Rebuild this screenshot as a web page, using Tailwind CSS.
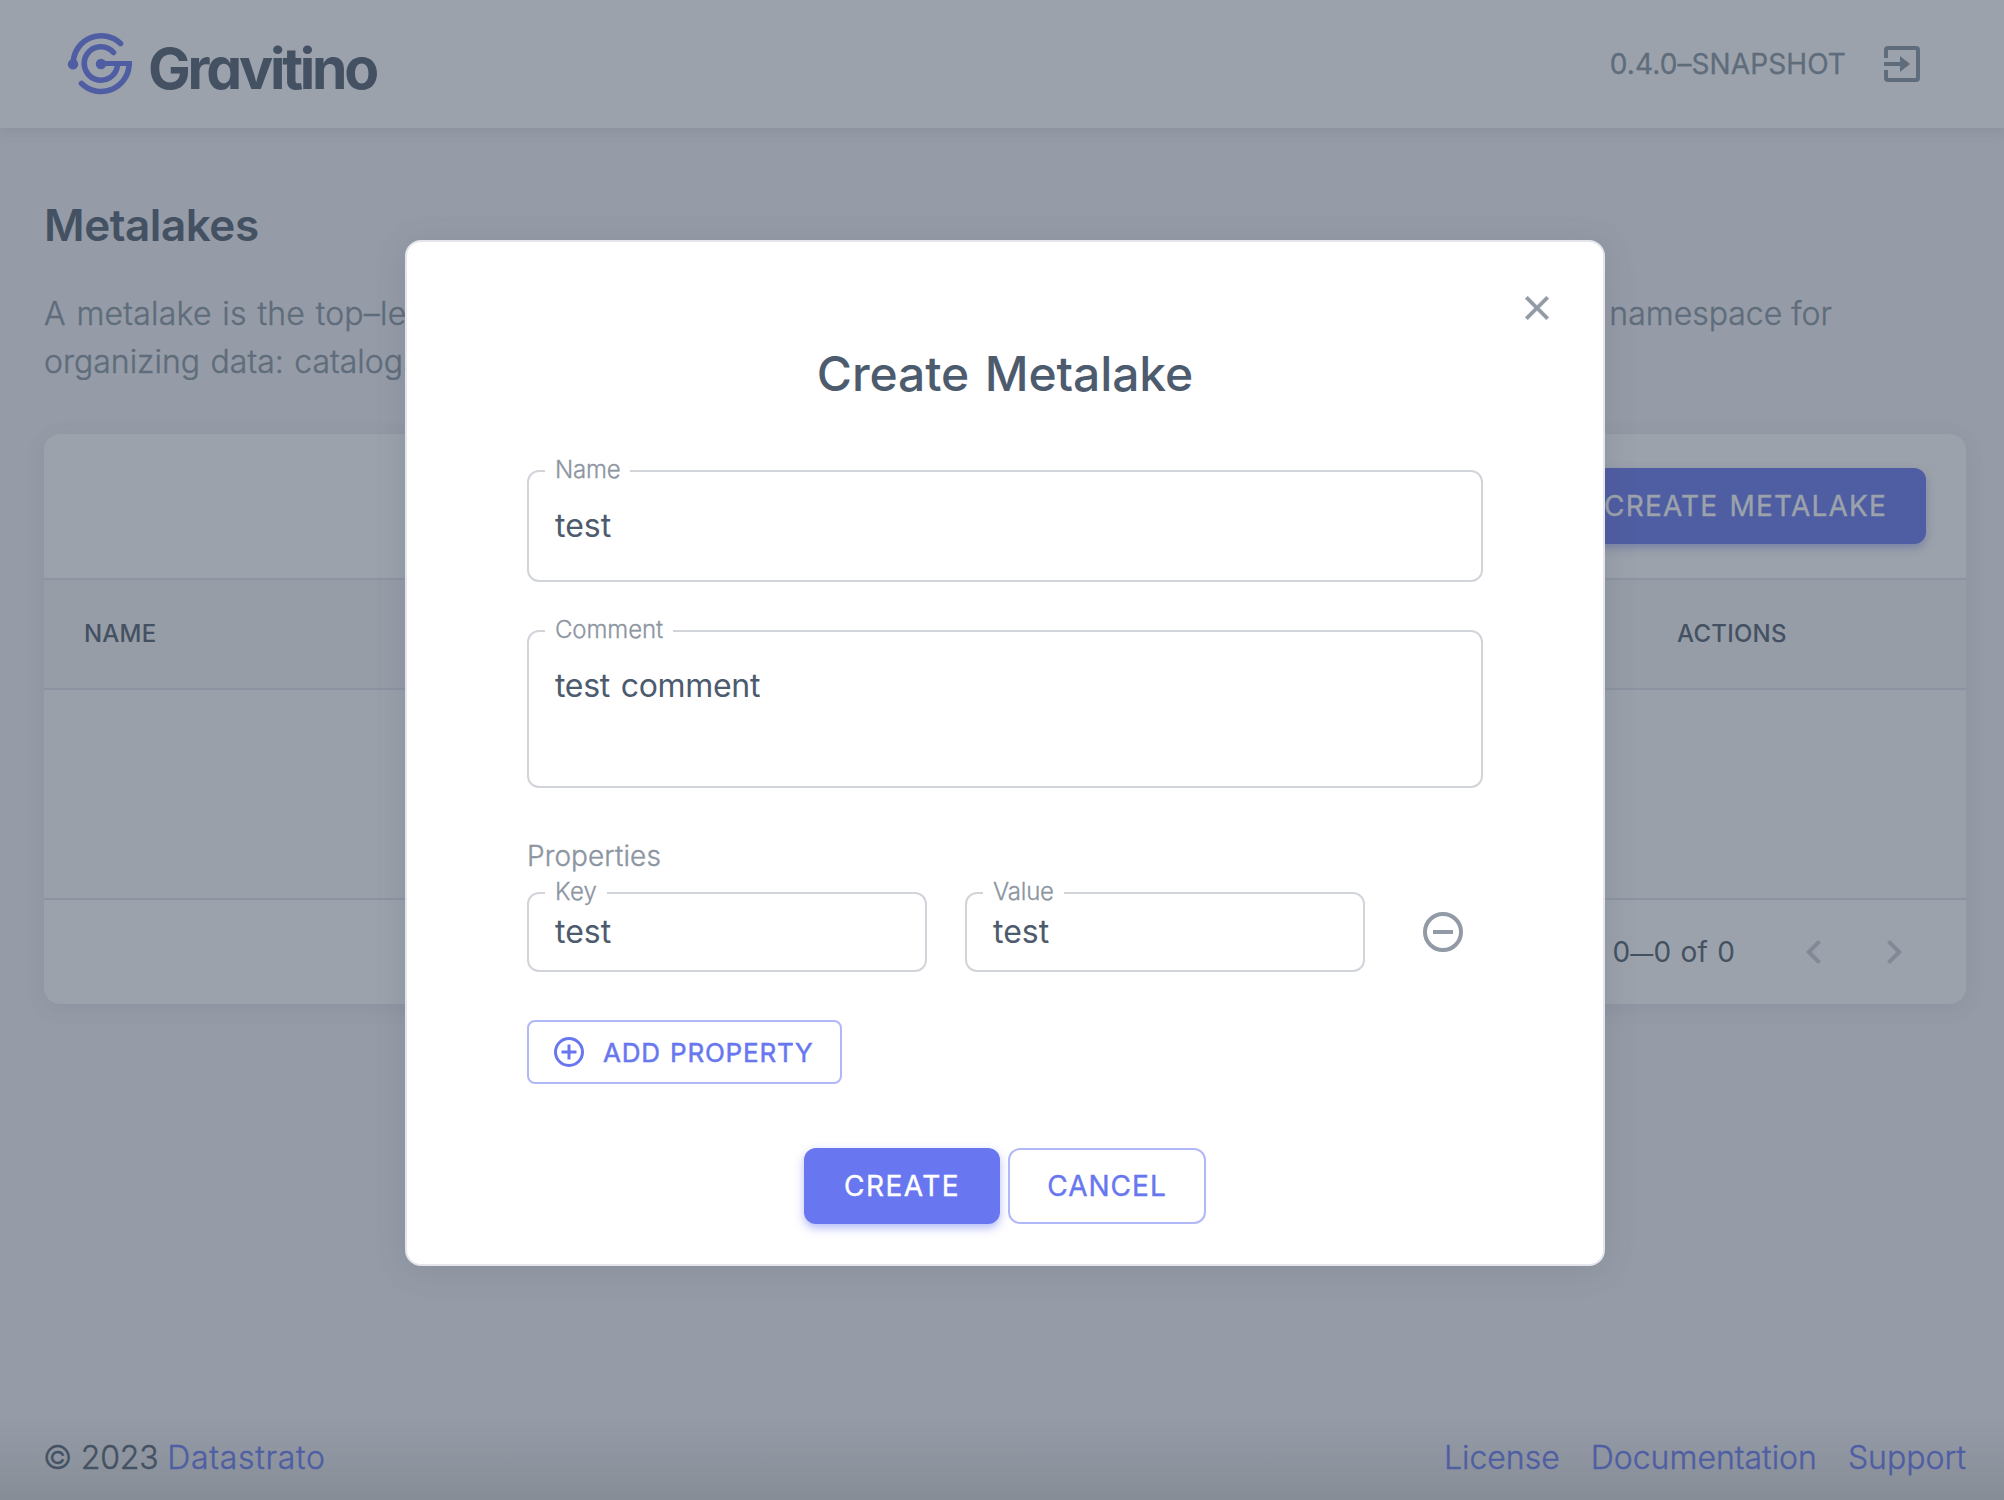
<!DOCTYPE html>
<html lang="en">
<head>
<meta charset="utf-8">
<title>Gravitino</title>
<script src="https://cdn.jsdelivr.net/npm/@tailwindcss/browser@4"></script>
</head>
<body class="h-[1500px] w-[2004px] overflow-hidden bg-[#959ca7] font-['Inter',sans-serif] text-[#445162]">
<div class="relative flex h-[1500px] w-full flex-col">
  <header class="flex h-32 shrink-0 items-center justify-between bg-[#9ba2ab] pr-[78px] pl-[66px] shadow-[0_4px_12px_rgba(70,75,100,0.12)]">
    <div class="flex items-center gap-[14px]">
      <svg class="h-[70px] w-[68px]" viewBox="66 29 68 70" fill="none" stroke="#4f5ea3" stroke-width="5.600" stroke-linecap="round">
        <path d="M73.200 62A28 28 0 0 1 120.500 43.500"/>
        <path d="M113.500 52.500A16.700 16.700 0 1 0 117.500 65.500"/>
        <path d="M129.100 65A28 28 0 0 1 81.500 83.500"/>
        <path d="M101 63.500H132" stroke-width="5" stroke-linecap="butt"/>
        <circle cx="73" cy="64.300" r="5.200" fill="#4f5ea3" stroke="none"/>
        <circle cx="101" cy="64" r="5.200" fill="#4f5ea3" stroke="none"/>
      </svg>
      <span class="mt-[9px] text-[57px] leading-[70px] font-bold tracking-[-3.2px] [font-feature-settings:'cv11']">Gravitino</span>
    </div>
    <div class="flex items-center gap-8 text-[#5f6c7b]">
      <span class="text-[28px] tracking-[0.1px] [-webkit-text-stroke:0.3px]">0.4.0–SNAPSHOT</span>
      <svg class="h-12 w-12" viewBox="0 0 24 24" fill="currentColor"><path d="M19 3H5a2 2 0 0 0-2 2v4h2V5h14v14H5v-4H3v4a2 2 0 0 0 2 2h14a2 2 0 0 0 2-2V5a2 2 0 0 0-2-2zM11 16l5-4-5-4v3H3v2h8z"/></svg>
    </div>
  </header>

  <main class="flex flex-1 flex-col pt-[68px] pr-[38px] pl-11">
    <h1 class="text-[44px] leading-[58px] font-semibold tracking-[-0.45px]">Metalakes</h1>
    <p class="mt-9 flex w-[1788px] flex-col text-[32px] leading-12 font-light text-[#5f6c7b] [-webkit-text-stroke:0.4px]">
      <span class="flex justify-between whitespace-nowrap"><span class="tracking-[0.2px] [word-spacing:1.5px]">A metalake is the top–level container for data in Gravitino. Within a metalake, Gravitino</span><span>namespace for</span></span>
      <span class="[word-spacing:1.5px]">organizing data: catalogs, schemas, and tables</span>
    </p>

    <section class="mt-12 flex h-[570px] flex-col rounded-[16px] bg-[#9ba2ab] shadow-[0_4px_20px_rgba(70,75,100,0.11)]">
      <div class="flex h-36 items-center justify-end pr-10">
        <button class="h-[76px] rounded-[12px] bg-[#4f5da2] px-[39px] text-[28px] tracking-[1.2px] text-[#9ba2ab] shadow-[0_4px_8px_rgba(79,93,162,0.45)] [-webkit-text-stroke:0.4px] [word-spacing:2px]">CREATE METALAKE</button>
      </div>
      <div class="flex h-28 items-center justify-between border-y-2 border-[#8d94a1] bg-[#969da7] pl-10 text-[24px] font-medium">
        <span class="tracking-[0.2px]">NAME</span>
        <span class="w-[289px] tracking-[0.25px]">ACTIONS</span>
      </div>
      <div class="h-[208px] bg-[#99a0a9]"></div>
      <div class="flex flex-1 items-center justify-end border-t-2 border-[#8d94a1] pr-12">
        <span class="mr-[55px] text-[28px] tracking-[0.2px] [word-spacing:1px]">0<span class="text-[23px]">—</span>0 of 0</span>
        <div class="flex gap-8 text-[#808995]">
          <svg class="h-12 w-12" viewBox="0 0 24 24" fill="currentColor"><path d="M15.410 16.580 10.830 12l4.580-4.590L14 6l-6 6 6 6z"/></svg>
          <svg class="h-12 w-12" viewBox="0 0 24 24" fill="currentColor"><path d="M8.590 16.580 13.170 12 8.590 7.410 10 6l6 6-6 6z"/></svg>
        </div>
      </div>
    </section>
  </main>

  <footer class="flex h-[84px] shrink-0 items-center justify-between bg-linear-to-b from-transparent to-[#868d97] pr-[38px] pl-[43px] text-[32px] font-light [-webkit-text-stroke:0.4px]">
    <div><span class="tracking-[-0.2px]">© 2023 </span><a class="tracking-[0.7px] text-[#4f5ea3]">Datastrato</a></div>
    <nav class="flex gap-[31px] text-[#4f5ea3]"><a>License</a><a>Documentation</a><a>Support</a></nav>
  </footer>

  <div class="absolute top-[240px] left-[405px] flex h-[1026px] w-[1200px] flex-col rounded-[16px] border-2 border-[#e4e6eb] bg-white px-[120px] text-[#4d5b6e] shadow-[0_4px_32px_rgba(70,75,100,0.16)]">
    <svg class="absolute top-[46px] right-[46px] h-10 w-10 text-[#919aa5]" viewBox="0 0 24 24" fill="currentColor" stroke="currentColor" stroke-width="0.400"><path d="M19 6.410 17.590 5 12 10.590 6.410 5 5 6.410 10.590 12 5 17.590 6.410 19 12 13.410 17.590 19 19 17.590 13.410 12z"/></svg>
    <h2 class="mt-[100px] text-center text-[48px] leading-[64px] font-medium tracking-[-0.1px] [word-spacing:3px]">Create Metalake</h2>

    <div class="relative mt-16 h-28 rounded-[12px] border-2 border-[#d1d5da] px-[26px] pt-[31px] text-[32px] leading-[46px]">
      <span class="absolute -top-[17px] left-4 bg-white px-[10px] text-[24px] leading-[29px] font-light tracking-[-0.2px] text-[#8c95a1] [-webkit-text-stroke:0.3px]">Name</span>test
    </div>
    <div class="relative mt-12 h-[158px] rounded-[12px] border-2 border-[#d1d5da] px-[26px] pt-[31px] text-[32px] leading-[46px] tracking-[-0.3px] [word-spacing:2px]">
      <span class="absolute -top-[17px] left-4 bg-white px-[10px] text-[24px] leading-[29px] font-light tracking-[-0.1px] text-[#8c95a1] [-webkit-text-stroke:0.3px]">Comment</span>test comment
    </div>

    <div class="mt-12 text-[28px] leading-10 font-light tracking-[0.1px] text-[#8c95a1] [-webkit-text-stroke:0.4px]">Properties</div>
    <div class="mt-4 flex items-center">
      <div class="relative h-20 w-[400px] rounded-[12px] border-2 border-[#d1d5da] px-[26px] text-[32px] leading-[76px]">
        <span class="absolute -top-[17px] left-4 bg-white px-[10px] text-[24px] leading-[29px] font-light tracking-[0.3px] text-[#8c95a1] [-webkit-text-stroke:0.3px]">Key</span>test
      </div>
      <div class="relative ml-[38px] h-20 w-[400px] rounded-[12px] border-2 border-[#d1d5da] px-[26px] text-[32px] leading-[76px]">
        <span class="absolute -top-[17px] left-4 bg-white px-[10px] text-[24px] leading-[29px] font-light tracking-[-0.2px] text-[#8c95a1] [-webkit-text-stroke:0.3px]">Value</span>test
      </div>
      <svg class="ml-[54px] h-12 w-12" viewBox="0 0 24 24" fill="none" stroke="#919aa5" stroke-width="2"><circle cx="12" cy="12" r="9"/><path d="M7 12h10"/></svg>
    </div>

    <button class="mt-12 flex h-16 w-[315px] items-center gap-[16px] rounded-[8px] border-2 border-[#b1b8f8] pl-[22px] text-[26px] text-[#6877ef]">
      <svg class="h-9 w-9" viewBox="0 0 24 24" fill="none" stroke="currentColor" stroke-width="2"><circle cx="12" cy="12" r="9"/><path d="M7 12h10M12 7v10"/></svg>
      <span class="tracking-[0.8px] [-webkit-text-stroke:0.5px] [word-spacing:1px]">ADD PROPERTY</span>
    </button>

    <div class="mt-16 flex justify-center gap-2 text-[28px] [-webkit-text-stroke:0.4px]">
      <button class="h-[76px] w-[196px] rounded-[12px] bg-[#6877ef] tracking-[1.5px] text-white shadow-[0_4px_10px_rgba(104,119,239,0.5)]">CREATE</button>
      <button class="h-[76px] w-[198px] rounded-[12px] border-2 border-[#b1b8f8] tracking-[1px] text-[#6877ef]">CANCEL</button>
    </div>
  </div>
</div>
</body>
</html>
